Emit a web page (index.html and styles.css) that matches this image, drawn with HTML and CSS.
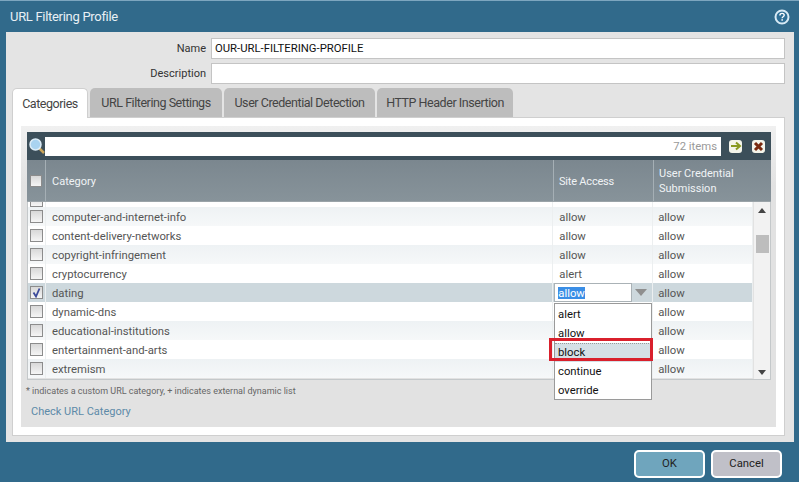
FILE: index.html
```html
<!DOCTYPE html>
<html>
<head>
	<title>URL Filtering Profile</title>
	<meta charset="UTF-8">
	<link rel="stylesheet" href="styles.css">
</head>
<body>
	<div class="ventana">
		<div class="titulo">
			<span>URL Filtering Profile</span>
			<svg class="ayuda" width="16" height="16" viewBox="0 0 16 16">
				<circle cx="8" cy="8" r="6.5" fill="#2f6f96" stroke="#d8eaf5" stroke-width="2"/>
				<path d="M5.9 6.4c0-1.3 1-2 2.2-2s2.1.7 2.1 1.8c0 1.5-2.1 1.5-2.1 3" fill="none" stroke="#fff" stroke-width="1.4"/>
				<rect x="7.4" y="10.2" width="1.5" height="1.5" fill="#fff"/>
			</svg>
		</div>
		<div class="panel">
			<div class="campo">
				<label>Name</label>
				<div class="entrada">OUR-URL-FILTERING-PROFILE</div>
			</div>
			<div class="campo">
				<label>Description</label>
				<div class="entrada"></div>
			</div>
			<div class="pestanas">
				<div class="pestana activa">Categories</div>
				<div class="pestana p2">URL Filtering Settings</div>
				<div class="pestana p3">User Credential Detection</div>
				<div class="pestana p4">HTTP Header Insertion</div>
			</div>
			<div class="contenido">
				<div class="interior">
					<div class="tabla">
						<div class="buscador">
							<svg class="lupa" width="18" height="18" viewBox="0 0 18 18">
								<path d="M11 11l5 5" stroke="#c9a45a" stroke-width="2.5"/>
								<circle cx="7.5" cy="7.5" r="5.5" fill="#a9d3f0" stroke="#dcecf7" stroke-width="1.5"/>
							</svg>
							<div class="caja">72 items</div>
							<div class="boton-mini">
								<svg width="12" height="10" viewBox="0 0 12 10"><path d="M1 5h8M6 1.5L10 5L6 8.5" fill="none" stroke="#8a9a22" stroke-width="2"/></svg>
							</div>
							<div class="boton-mini">
								<svg width="11" height="11" viewBox="0 0 11 11"><path d="M2 2l7 7M9 2l-7 7" stroke="#7a2a10" stroke-width="3"/></svg>
							</div>
						</div>
						<div class="cabecera">
							<div class="cel-check"><span class="check"></span></div>
							<div class="cat">Category</div>
							<div class="sitio">Site Access</div>
							<div class="usuario">User Credential Submission</div>
						</div>
						<div class="cuerpo">
							<div class="filas">
								<div class="fila parcial"><div class="cel-check"><span class="check"></span></div><div class="cat"></div><div class="sitio"></div><div class="usuario"></div></div>
								<div class="fila gris"><div class="cel-check"><span class="check"></span></div><div class="cat">computer-and-internet-info</div><div class="sitio">allow</div><div class="usuario">allow</div></div>
								<div class="fila"><div class="cel-check"><span class="check"></span></div><div class="cat">content-delivery-networks</div><div class="sitio">allow</div><div class="usuario">allow</div></div>
								<div class="fila gris"><div class="cel-check"><span class="check"></span></div><div class="cat">copyright-infringement</div><div class="sitio">allow</div><div class="usuario">allow</div></div>
								<div class="fila"><div class="cel-check"><span class="check"></span></div><div class="cat">cryptocurrency</div><div class="sitio">alert</div><div class="usuario">allow</div></div>
								<div class="fila marcada">
									<div class="cel-check">
										<span class="check">
											<svg width="11" height="11" viewBox="0 0 11 11"><path d="M2.5 5.5L5 9.5L8.5 1.5" fill="none" stroke="#3c4a9a" stroke-width="1.8"/></svg>
										</span>
									</div>
									<div class="cat">dating</div>
									<div class="sitio editor">
										<span class="valor"><span class="seleccion">allow</span></span>
										<span class="flecha"></span>
									</div>
									<div class="usuario">allow</div>
								</div>
								<div class="fila"><div class="cel-check"><span class="check"></span></div><div class="cat">dynamic-dns</div><div class="sitio"></div><div class="usuario">allow</div></div>
								<div class="fila gris"><div class="cel-check"><span class="check"></span></div><div class="cat">educational-institutions</div><div class="sitio"></div><div class="usuario">allow</div></div>
								<div class="fila"><div class="cel-check"><span class="check"></span></div><div class="cat">entertainment-and-arts</div><div class="sitio"></div><div class="usuario">allow</div></div>
								<div class="fila gris"><div class="cel-check"><span class="check"></span></div><div class="cat">extremism</div><div class="sitio"></div><div class="usuario">allow</div></div>
							</div>
							<div class="scroll">
								<span class="tri arriba"></span>
								<span class="pulgar"></span>
								<span class="tri abajo"></span>
							</div>
						</div>
						<div class="lista">
							<div>alert</div>
							<div>allow</div>
							<div class="foco">block</div>
							<div>continue</div>
							<div>override</div>
						</div>
						<div class="resalte"></div>
					</div>
					<p class="nota">* indicates a custom URL category, + indicates external dynamic list</p>
					<a class="enlace">Check URL Category</a>
				</div>
			</div>
		</div>
		<div class="pie">
			<div class="boton ok">OK</div>
			<div class="boton">Cancel</div>
		</div>
	</div>
</body>
</html>
```

FILE: styles.css
```css
*{
    box-sizing: border-box;
}
body{
    margin: 0;
    font-family: Roboto, "Noto Sans", sans-serif;
    font-size: 11.3px;
}
.ventana{
    width: 799px;
    height: 482px;
    background-color: #316a8b;
    border-top: 1px solid #7da6bf;
    padding: 0 5px 0 6px;
    overflow: hidden;
}
.titulo{
    height: 31px;
    display: flex;
    align-items: center;
    justify-content: space-between;
    margin-left: -6px;
    margin-right: -5px;
    padding: 0 9px 0 10px;
    color: #e8f0f5;
    font-size: 13px;
    letter-spacing: -0.3px;
}
.panel{
    height: 410px;
    background-color: #e4e4e4;
    padding: 6px 9px 0 6px;
}
.campo{
    display: flex;
    align-items: center;
    justify-content: flex-end;
    height: 21px;
    margin-bottom: 4px;
    color: #333;
}
.campo label{
    margin-right: 5px;
    font-size: 11px;
}
.entrada{
    width: 574px;
    height: 21px;
    background-color: #fff;
    border: 1px solid #c4c4c4;
    line-height: 19px;
    padding-left: 3px;
    color: #111;
}
.pestanas{
    display: flex;
    height: 30px;
    gap: 2px;
    font-size: 12.5px;
    letter-spacing: -0.45px;
    color: #444;
}
.pestana{
    background-color: #bdbdbd;
    border-radius: 5px 5px 0 0;
    line-height: 29px;
    text-align: center;
    height: 29px;
    white-space: nowrap;
}
.pestana.activa{
    width: 76px;
    height: 30px;
    background-color: #fff;
    border: 1px solid #cfcfcf;
    border-bottom: none;
    position: relative;
    z-index: 1;
}
.p2{ width: 132px; }
.p3{ width: 151px; }
.p4{ width: 136px; }
.contenido{
    height: 319px;
    margin-top: -1px;
    background-color: #fff;
    border: 1px solid #cfcfcf;
    padding: 8px;
}
.interior{
    height: 301px;
    background: linear-gradient(#f0f0f0, #e2e2e2 60px);
    padding: 6px 5px 0 6px;
}
.tabla{
    position: relative;
}
.buscador{
    height: 28px;
    background-color: #3c4f5a;
    display: flex;
    align-items: center;
    padding-left: 18px;
    position: relative;
}
.lupa{
    position: absolute;
    left: 1px;
    top: 5px;
}
.caja{
    width: 676px;
    height: 19px;
    flex-shrink: 0;
    background-color: #fff;
    color: #999;
    text-align: right;
    padding-right: 4px;
    line-height: 19px;
    margin-right: 8px;
}
.boton-mini{
    width: 13px;
    height: 13px;
    flex-shrink: 0;
    background-color: #f4f4ea;
    border-radius: 3px;
    margin-right: 10px;
    display: flex;
    align-items: center;
    justify-content: center;
}
.cabecera{
    display: flex;
    height: 42px;
    background: linear-gradient(#7b878f, #87939a);
    color: #f0f3f5;
    border-bottom: 1px solid #9aa3a8;
    font-size: 11px;
}
.cabecera > div{
    display: flex;
    align-items: center;
    border-right: 1px solid #a5afb5;
}
.cabecera .usuario{
    border-right: none;
    line-height: 15px;
}
.cabecera .cat{
    padding-top: 1px;
}
.cabecera .sitio{
    padding-left: 5px;
    padding-top: 1px;
    letter-spacing: -0.2px;
}
.cabecera .check{
    width: 12px;
    height: 12px;
}
.cel-check{
    width: 19px;
    display: flex;
    align-items: center;
    justify-content: center;
    flex-shrink: 0;
}
.cat{
    width: 508px;
    padding-left: 6px;
}
.sitio{
    width: 100px;
    padding-left: 6px;
}
.usuario{
    width: 100px;
    padding-left: 5px;
}
.check{
    width: 13px;
    height: 13px;
    background: linear-gradient(#d8d8d8, #f5f5f5);
    border: 1px solid #8c8c8c;
    display: block;
}
.check svg{
    display: block;
}
.cuerpo{
    display: flex;
    height: 178px;
    border: 1px solid #c4c8ca;
    border-top: none;
    overflow: hidden;
}
.filas{
    width: 725px;
    flex-shrink: 0;
}
.fila{
    display: flex;
    align-items: center;
    height: 19px;
    color: #555;
    background-color: #fff;
}
.fila > div{
    height: 100%;
    display: flex;
    align-items: center;
    border-right: 1px solid #eceff0;
}
.fila .cat, .fila .sitio, .fila .usuario{
    padding-top: 1px;
}
.fila .cel-check{
    width: 18px;
}
.fila.gris{
    background: linear-gradient(#eef2f4, #f6f8f9);
}
.fila.marcada{
    background-color: #cdd8dd;
}
.fila.parcial{
    height: 5px;
    overflow: hidden;
    align-items: flex-end;
}
.fila.parcial .cel-check{
    align-items: flex-end;
}
.fila .editor{
    position: relative;
    padding-left: 1px;
    padding-top: 0;
}
.valor{
    width: 78px;
    height: 19px;
    background-color: #fff;
    border: 1px solid #aab2b6;
    padding-left: 3px;
    line-height: 19px;
    color: #fff;
}
.seleccion{
    background-color: #3a8ee6;
    display: inline-block;
    height: 12px;
    line-height: 14px;
}
.flecha{
    width: 0;
    height: 0;
    margin-left: 3px;
    border-left: 6px solid transparent;
    border-right: 6px solid transparent;
    border-top: 7px solid #8f8f8f;
}
.scroll{
    flex: 1;
    background-color: #f2f2f2;
    position: relative;
    border-left: 1px solid #e2e2e2;
}
.pulgar{
    position: absolute;
    left: 2px;
    top: 33px;
    width: 13px;
    height: 18px;
    background-color: #bdbdbd;
}
.tri{
    position: absolute;
    left: 4px;
    border-left: 4px solid transparent;
    border-right: 4px solid transparent;
}
.arriba{
    top: 6px;
    border-bottom: 5px solid #444;
}
.abajo{
    bottom: 4px;
    border-top: 5px solid #444;
}
.lista{
    position: absolute;
    left: 527px;
    top: 171px;
    width: 98px;
    height: 97px;
    background-color: #fff;
    border: 1px solid #9a9a9a;
    color: #111;
    z-index: 2;
    padding-top: 1px;
}
.lista div{
    height: 19px;
    line-height: 19px;
    padding-left: 3px;
}
.lista .foco{
    background-color: #d5e0e6;
    border-top: 1px dotted #999;
    line-height: 18px;
}
.resalte{
    position: absolute;
    left: 522px;
    top: 206px;
    width: 104px;
    height: 23px;
    border: 3px solid #d9202c;
    z-index: 3;
}
.nota{
    margin: 5px 0 0 -1px;
    font-size: 9px;
    color: #666;
    line-height: 13px;
}
.enlace{
    display: block;
    margin-top: 7px;
    margin-left: 4px;
    color: #5d8aa8;
    font-size: 11px;
    line-height: 14px;
}
.pie{
    display: flex;
    justify-content: flex-end;
    gap: 6px;
    padding: 8px 12px 0 0;
}
.boton{
    width: 71px;
    height: 28px;
    background-color: #c0c0c8;
    border: 2px solid #fff;
    border-radius: 5px;
    text-align: center;
    line-height: 24px;
    color: #222;
}
.boton.ok{
    background-color: #6fa5bd;
}
```
